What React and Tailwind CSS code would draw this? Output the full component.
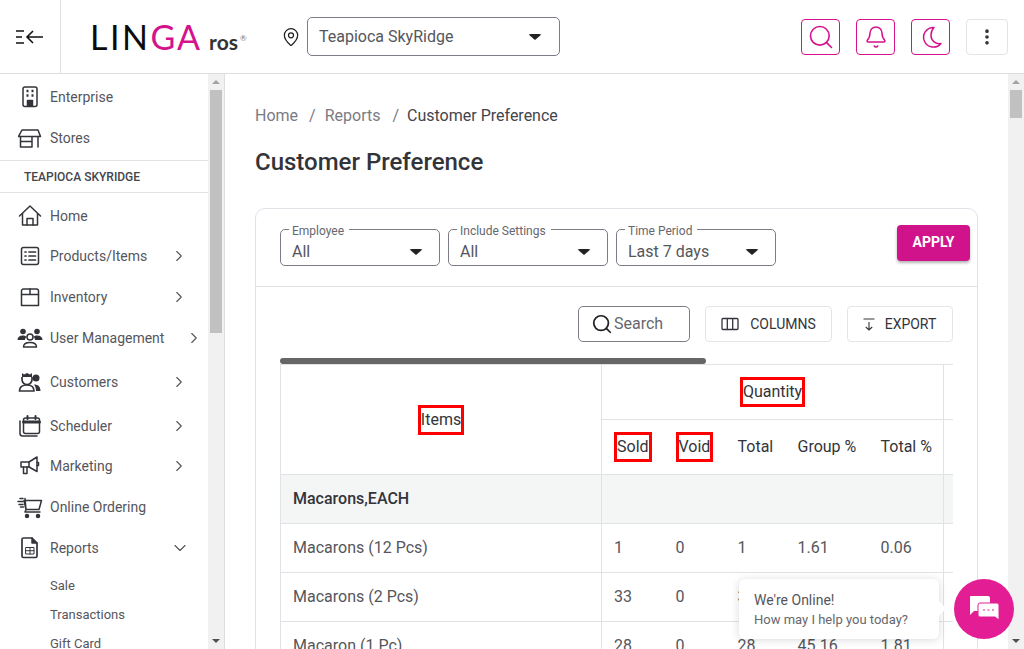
import { Search, Bell, EllipsisVertical, ChevronRight, ChevronDown, MapPin, Columns3 } from 'lucide-react'

const Icon = ({ children }) => (
  <svg viewBox="0 0 24 24" width="24" height="24" fill="none" stroke="#33343a" strokeWidth="1.5" strokeLinecap="round" strokeLinejoin="round">
    {children}
  </svg>
)

const icons = {
  enterprise: (
    <Icon>
      <rect x="5" y="2" width="14" height="19.500" rx="2" />
      <path d="M8.500 6h2M13.500 6h2M8.500 10.500h2M13.500 10.500h2" strokeWidth="2.400" strokeLinecap="butt" />
      <path d="M9.500 21v-5.500h5V21" fill="#33343a" />
    </Icon>
  ),
  stores: (
    <Icon>
      <path d="M4 4h16l2.500 6.500H.5z" />
      <path d="M2.500 10.500V21M20 10.500V21M3 21h11V11M3 15.500h11" />
    </Icon>
  ),
  home: (
    <Icon>
      <path d="M1.500 12L12 2l10.500 10M4.500 9.500V21h15V9.500" />
      <path d="M9 21v-6.500h6V21" />
    </Icon>
  ),
  products: (
    <Icon>
      <rect x="3.500" y="3.500" width="17" height="17" rx="2" />
      <path d="M7 8h1M7 12h1M7 16h1M11 8h6.500M11 12h6.500M11 16h6.500" strokeWidth="1.700" />
    </Icon>
  ),
  inventory: (
    <Icon>
      <path d="M5.500 4h13a2 2 0 0 1 2 2v14.500h-17V6a2 2 0 0 1 2-2z" />
      <path d="M3.500 9.500h17M12 4v5.500" />
    </Icon>
  ),
  users: (
    <svg viewBox="0 0 26 24" width="26" height="24" fill="#33343a">
      <circle cx="6" cy="5.500" r="2.800" />
      <circle cx="20" cy="5.500" r="2.800" />
      <path d="M.5 14c0-3 2-4.500 5.500-4.500 1.500 0 3 .5 3.500 1.500-1.200 1-1.500 2-1.500 3zM25.500 14c0-3-2-4.500-5.500-4.500-1.500 0-3 .5-3.500 1.500 1.200 1 1.500 2 1.500 3z" />
      <circle cx="13" cy="11" r="3" fill="none" stroke="#33343a" strokeWidth="1.500" />
      <path d="M6.500 21c0-3.500 2.500-4.500 6.500-4.500s6.500 1 6.500 4.500z" fill="none" stroke="#33343a" strokeWidth="1.500" strokeLinejoin="round" />
    </svg>
  ),
  customers: (
    <svg viewBox="0 0 24 24" width="24" height="24" fill="#33343a">
      <path d="M4 3l2 1.500L9 3l3 1.500L14 3v4H4z" />
      <path d="M4 7v2.500a5 5 0 0 0 10 0V7" fill="none" stroke="#33343a" strokeWidth="1.700" />
      <circle cx="18" cy="8" r="3.500" />
      <path d="M1.500 21c0-4.500 3-6 7.500-6s7 1.500 7 6z" fill="none" stroke="#33343a" strokeWidth="1.700" strokeLinejoin="round" />
      <path d="M16 14.500c4 0 6.500 2 6.500 6.500H18c0-3-.5-4.500-2-6.500z" />
    </svg>
  ),
  scheduler: (
    <Icon>
      <rect x="5.500" y="4" width="16" height="15.500" rx="2" />
      <path d="M5.500 8h16" strokeWidth="3" />
      <path d="M9.500 2v3M17.500 2v3" strokeWidth="2" />
      <path d="M2 7v12.500a2.500 2.500 0 0 0 2.500 2.500H19" />
    </Icon>
  ),
  marketing: (
    <Icon>
      <path d="M3 8h8l8-5v14.500l-8-4.500H3z" />
      <path d="M5.500 13v6.500H9V13M11 8v5M19 8.500h1.500v3H19" />
    </Icon>
  ),
  online: (
    <svg viewBox="0 0 26 24" width="26" height="24" fill="none" stroke="#33343a" strokeWidth="1.500" strokeLinecap="round" strokeLinejoin="round">
      <path d="M7 5.500h17.500l-2.500 9H9zM8 3.500l1 11-1 2.500h15" />
      <circle cx="10" cy="21" r="1.500" fill="#33343a" />
      <circle cx="21" cy="21" r="1.500" fill="#33343a" />
      <path d="M3 3.500h3M1 6.500h5M2 9.500h4M3.500 12h3" />
    </svg>
  ),
  reports: (
    <Icon>
      <path d="M5.500 2h8.500l5 5v13a1.500 1.500 0 0 1-1.500 1.500h-12A1.500 1.500 0 0 1 4 20V3.500A1.500 1.500 0 0 1 5.500 2z" strokeWidth="1.700" />
      <path d="M14 2v5h5" fill="#33343a" />
      <rect x="8" y="11.500" width="8" height="6.500" strokeWidth="1" />
      <path d="M12 11.500V18M8 14.700h8" strokeWidth="1" />
    </Icon>
  ),
}

const menuTop = [
  { label: 'Enterprise', icon: 'enterprise', h: 'h-[42px]' },
  { label: 'Stores', icon: 'stores', h: 'h-[42px] pb-[2px]' },
]

const menu = [
  { label: 'Home', icon: 'home', h: 'h-[46px]' },
  { label: 'Products/Items', icon: 'products', h: 'h-[36px] pb-[2px]', arrow: true },
  { label: 'Inventory', icon: 'inventory', h: 'h-[44px]', arrow: true },
  { label: 'User Management', icon: 'users', h: 'h-[38px]', arrow: true, wide: true },
  { label: 'Customers', icon: 'customers', h: 'h-[50px]', arrow: true },
  { label: 'Scheduler', icon: 'scheduler', h: 'h-[38px]', arrow: true },
  { label: 'Marketing', icon: 'marketing', h: 'h-[42px]', arrow: true },
  { label: 'Online Ordering', icon: 'online', h: 'h-[40px]' },
  { label: 'Reports', icon: 'reports', h: 'h-[42px]', open: true },
]

const subMenu = [
  { label: 'Sale', h: 'h-[34px]' },
  { label: 'Transactions', h: 'h-[24px]' },
  { label: 'Gift Card', h: 'h-[34px]' },
]

const rows = [
  { name: 'Macarons (12 Pcs)', vals: ['1', '0', '1', '1.61', '0.06'] },
  { name: 'Macarons (2 Pcs)', vals: ['33', '0', '33', '53.23', '2.13'] },
  { name: 'Macaron (1 Pc)', vals: ['28', '0', '28', '45.16', '1.81'] },
]

const NavRow = ({ item }) => (
  <div className={`flex items-center ${item.h} pl-[17px] text-[14px] text-[#55565c]`}>
    <span className="w-[26px] flex justify-center shrink-0">{icons[item.icon]}</span>
    <span className="ml-[7px] whitespace-nowrap">{item.label}</span>
    {item.arrow && (
      <ChevronRight size={18} strokeWidth={1.5} color="#55565c" className={`ml-auto ${item.wide ? 'mr-[5px]' : 'mr-[20px]'}`} />
    )}
    {item.open && <ChevronDown size={20} strokeWidth={1.4} color="#55565c" className="ml-auto mr-[18px]" />}
  </div>
)

const Scrollbar = ({ thumb }) => (
  <div className="w-4 shrink-0 bg-[#f1f1f1] flex flex-col items-center">
    <div className="h-4 flex items-center justify-center">
      <div className="w-0 h-0 border-x-[4px] border-x-transparent border-b-[4px] border-b-[#a3a3a3]"></div>
    </div>
    <div className={`w-3 bg-[#c1c1c1] ${thumb}`}></div>
    <div className="mt-auto h-4 flex items-center justify-center">
      <div className="w-0 h-0 border-x-[4px] border-x-transparent border-t-[4px] border-t-[#505050]"></div>
    </div>
  </div>
)

const Caret = () => <div className="w-0 h-0 border-x-[7px] border-x-transparent border-t-[6px] border-t-[#222] rounded-sm"></div>

const Filter = ({ label, value }) => (
  <fieldset className="w-[160px] h-[42px] border border-[#7b7c85] rounded-[5px] pl-[11px] pr-[16px]">
    <legend className="-ml-[3px] pl-[3px] pr-[5px] text-[12px] leading-[11px] text-[#66676d] whitespace-nowrap">
      <span className="inline-block translate-y-[2px]">{label}</span>
    </legend>
    <div className="mt-[4px] flex items-center justify-between h-[26px] text-[16px] text-[#55565c]">
      <span>{value}</span>
      <Caret />
    </div>
  </fieldset>
)

const Marked = ({ children }) => (
  <span className="inline-block border-[3px] border-[#ff0000] leading-[24px]">{children}</span>
)

const App = () => {
  return (
    <div className="relative w-[1024px] h-[649px] overflow-hidden bg-white flex flex-col font-['Roboto',sans-serif]">
      {/* top bar */}
      <header className="h-[74px] shrink-0 flex items-center border-b border-[#dedede]">
        <div className="w-[61px] h-full border-r border-[#e2e2e2] flex items-center justify-center">
          <svg viewBox="0 0 28 16" width="28" height="16" fill="none" stroke="#111" strokeWidth="1.600">
            <path d="M0 2h8M0 8h6M0 14h8M27 8H11M17 2l-6 6 6 6" />
          </svg>
        </div>
        <div className="ml-[29px] w-[191px] flex items-baseline whitespace-nowrap font-['Lato',sans-serif]">
          <span className="text-[34px] leading-none font-normal tracking-[2.500px] text-[#0b0b0d]">LIN</span>
          <span className="text-[34px] leading-none font-normal tracking-[2px] text-[#d5128c]">GA</span>
          <span className="ml-[7px] text-[21px] leading-none font-bold text-[#333]">ros</span>
          <span className="ml-[2px] text-[8px] text-[#777] -translate-y-[9px]">®</span>
        </div>
        <MapPin size={20} strokeWidth={1.5} color="#222" />
        <div className="ml-[6px] w-[253px] h-[39px] border border-[#7b7c85] rounded-[5px] flex items-center justify-between pl-[11px] pr-[17px] text-[16px] text-[#55565c]">
          <span>Teapioca SkyRidge</span>
          <Caret />
        </div>
        <div className="ml-auto mr-[16px] flex items-center gap-[16px]">
          <button className="w-[39px] h-[36px] border border-[#d5128c] rounded-[4px] flex items-center justify-center">
            <Search size={28} strokeWidth={1.4} color="#d5128c" />
          </button>
          <button className="w-[39px] h-[36px] border border-[#d5128c] rounded-[4px] flex items-center justify-center">
            <Bell size={24} strokeWidth={1.5} color="#d5128c" />
          </button>
          <button className="w-[39px] h-[36px] border border-[#d5128c] rounded-[4px] flex items-center justify-center">
            <svg viewBox="0 0 24 24" width="24" height="24" fill="none" stroke="#d5128c" strokeWidth="1.500" strokeLinejoin="round">
              <path d="M15 2.500a9.800 9.800 0 1 0 7 16c-5 1-10-2.500-10-8 0-3.500 1-6 3-8z" />
            </svg>
          </button>
          <button className="w-[42px] h-[36px] border border-[#e4e4e4] rounded-[4px] flex items-center justify-center">
            <EllipsisVertical size={20} strokeWidth={2.4} color="#333" />
          </button>
        </div>
      </header>

      <div className="flex flex-1 min-h-0">
        {/* sidebar */}
        <aside className="w-[225px] shrink-0 flex border-r border-[#dedede]">
          <div className="flex-1 overflow-hidden pt-[2px]">
            {menuTop.map((item) => <NavRow key={item.label} item={item} />)}
            <div className="h-[33px] border-y border-[#e2e2e2] flex items-center pl-[24px] pt-[1px] text-[12px] font-medium text-[#44454b]">
              TEAPIOCA SKYRIDGE
            </div>
            {menu.map((item) => <NavRow key={item.label} item={item} />)}
            {subMenu.map((item) => (
              <div key={item.label} className={`${item.h} flex items-center pl-[50px] text-[13px] text-[#55565c]`}>{item.label}</div>
            ))}
          </div>
          <Scrollbar thumb="h-[243px]" />
        </aside>

        {/* page */}
        <main className="flex-1 min-w-0 flex">
          <div className="flex-1 min-w-0 overflow-hidden pl-[30px] pt-[30px]">
            <div className="flex items-center h-[24px] text-[16px] text-[#7a7b82] whitespace-nowrap">
              <span>Home</span>
              <span className="ml-[11px]">/</span>
              <span className="ml-[9px]">Reports</span>
              <span className="ml-[12px]">/</span>
              <span className="ml-[8px] text-[#44454b]">Customer Preference</span>
            </div>
            <h1 className="mt-[18px] text-[24px] leading-[32px] font-medium text-[#33343a]">Customer Preference</h1>

            <section className="mt-[30px] w-[723px] border border-[#e0e2e8] rounded-[10px]">
              <div className="h-[78px] border-b border-[#e0e2e8] flex items-start pl-[24px] pr-[7px] pt-[15px]">
                <div className="flex gap-[8px]">
                  <Filter label="Employee" value="All" />
                  <Filter label="Include Settings" value="All" />
                  <Filter label="Time Period" value="Last 7 days" />
                </div>
                <button className="ml-auto mt-px w-[73px] h-[36px] pb-[2px] rounded-[4px] bg-[#d0138a] text-white text-[14px] font-bold shadow-[0_2px_3px_rgba(0,0,0,0.3)]">
                  APPLY
                </button>
              </div>

              <div className="px-[24px] pt-[19px]">
                <div className="flex justify-end gap-[15px]">
                  <div className="w-[112px] h-[36px] border border-[#7b7c85] rounded-[5px] flex items-center pl-[12px] text-[16px] text-[#66676d]">
                    <Search size={22} strokeWidth={1.9} color="#222" />
                    <span className="ml-[1px]">Search</span>
                  </div>
                  <button className="w-[127px] h-[36px] border border-[#e4e5ea] rounded-[4px] flex items-center justify-center gap-[11px] text-[14px] text-[#33343a]">
                    <svg viewBox="0 0 18 14" width="18" height="14" fill="none" stroke="#33343a" strokeWidth="1.300">
                      <rect x="1" y="1.500" width="16" height="11" rx="1" />
                      <path d="M6.300 1.500v11M11.700 1.500v11" />
                    </svg>
                    COLUMNS
                  </button>
                  <button className="w-[106px] h-[36px] border border-[#e4e5ea] rounded-[4px] flex items-center justify-center gap-[9px] pr-[2px] text-[14px] text-[#33343a]">
                    <svg viewBox="0 0 14 14" width="14" height="14" fill="none" stroke="#33343a" strokeWidth="1.100">
                      <path d="M1.500 2h11M7 5v8M3.800 10l3.200 3 3.200-3" />
                    </svg>
                    EXPORT
                  </button>
                </div>

                <div className="mt-[16px] w-[426px] h-[6px] rounded-full bg-[#666666]"></div>

                <div className="w-[673px] overflow-hidden">
                  <table className="table-fixed border-collapse w-[763px] text-[16px] text-[#55565c]">
                    <colgroup>
                      <col className="w-[321px]" />
                      <col className="w-[62px]" />
                      <col className="w-[62px]" />
                      <col className="w-[60px]" />
                      <col className="w-[83px]" />
                      <col className="w-[75px]" />
                      <col className="w-[100px]" />
                    </colgroup>
                    <thead className="text-[#33343a]">
                      <tr className="h-[55px]">
                        <th rowSpan={2} className="border border-[#e0e2e8] font-normal text-center"><Marked>Items</Marked></th>
                        <th colSpan={5} className="border border-[#e0e2e8] font-normal text-center"><Marked>Quantity</Marked></th>
                        <th className="border border-[#e0e2e8]"></th>
                      </tr>
                      <tr className="h-[55px]">
                        <th className="border-y border-[#e0e2e8] pl-[12px] font-normal text-left"><Marked>Sold</Marked></th>
                        <th className="border-y border-[#e0e2e8] pl-[12px] font-normal text-left"><Marked>Void</Marked></th>
                        <th className="border-y border-[#e0e2e8] pl-[12px] font-normal text-left">Total</th>
                        <th className="border-y border-[#e0e2e8] pl-[12px] font-normal text-left">Group %</th>
                        <th className="border-y border-[#e0e2e8] border-r pl-[12px] font-normal text-left">Total %</th>
                        <th className="border border-[#e0e2e8]"></th>
                      </tr>
                    </thead>
                    <tbody>
                      <tr className="h-[49px] bg-[#f4f5f5]">
                        <td className="border border-[#e0e2e8] pl-[12px] font-medium text-[#33343a]">Macarons,EACH</td>
                        <td colSpan={5} className="border border-[#e0e2e8]"></td>
                        <td className="border border-[#e0e2e8]"></td>
                      </tr>
                      {rows.map((row) => (
                        <tr key={row.name} className="h-[49px]">
                          <td className="border border-[#e0e2e8] pl-[12px]">{row.name}</td>
                          {row.vals.map((v, i) => (
                            <td key={i} className={`border-y border-[#e0e2e8] pl-[12px] ${i === 4 ? 'border-r' : ''}`}>{v}</td>
                          ))}
                          <td className="border border-[#e0e2e8]"></td>
                        </tr>
                      ))}
                    </tbody>
                  </table>
                </div>
              </div>
            </section>
          </div>
          <Scrollbar thumb="h-[28px]" />
        </main>
      </div>

      {/* chat widget */}
      <div className="absolute left-[739px] top-[579px] w-[200px] h-[60px] bg-white rounded-[6px] shadow-[0_1px_8px_rgba(0,0,0,0.15)] pl-[15px] pt-[12px]">
        <div className="text-[14px] leading-[18px] text-[#55565c]">We're Online!</div>
        <div className="mt-[2px] text-[13px] leading-[18px] text-[#66676d] whitespace-nowrap">How may I help you today?</div>
        <div className="absolute -right-[5px] top-[24px] w-[11px] h-[11px] rotate-45 bg-white"></div>
      </div>
      <div className="absolute left-[954px] top-[579px] w-[60px] h-[60px] rounded-full bg-[#e31e95] flex items-center justify-center">
        <svg viewBox="0 0 32 30" width="32" height="30">
          <path d="M3 2h17a2 2 0 0 1 2 2v11a2 2 0 0 1-2 2H6l-4 4V3a1 1 0 0 1 1-1z" fill="#fff" />
          <path d="M12 9h17a2 2 0 0 1 2 2v15l-4-3H12a2 2 0 0 1-2-2V11a2 2 0 0 1 2-2z" fill="#fff" stroke="#e31e95" strokeWidth="1" />
          <path d="M15 16h2M19.500 16h2M24 16h2" stroke="#e31e95" strokeWidth="1.200" />
        </svg>
      </div>
    </div>
  )
}

export default App
